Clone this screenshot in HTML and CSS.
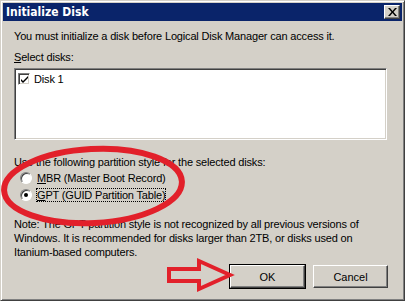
FILE: index.html
```html
<!DOCTYPE html>
<html>
<head>
<meta charset="utf-8">
<link rel="stylesheet" href="styles.css">
</head>
<body>
<div class="window">
  <div class="titlebar">
    <span class="title">Initialize Disk</span>
    <span class="close"><svg width="9" height="8" viewBox="0 0 9 8"><path d="M0 0h2l2.5 3 2.5-3h2l-3.5 4 3.5 4h-2l-2.5-3-2.5 3h-2l3.5-4z" fill="#000"/></svg></span>
  </div>
  <div class="content">
    <p class="intro">You must initialize a disk before Logical Disk Manager can access it.</p>
    <p class="label"><u>S</u>elect disks:</p>
    <div class="listbox">
      <div class="item"><span class="check"><svg width="9" height="9" viewBox="0 0 9 9"><path d="M1 4l2 2 5-5v2l-5 5-2-2z" fill="#000"/></svg></span>Disk 1</div>
    </div>
    <p class="label2">Use the following partition style for the selected disks:</p>
    <div class="radios">
      <div class="radio"><span class="rb"></span><span><u>M</u>BR (Master Boot Record)</span></div>
      <div class="radio"><span class="rb on"></span><span class="focus"><u>G</u>PT (GUID Partition Table)</span></div>
    </div>
    <p class="note">Note: The GPT partition style is not recognized by all previous versions of Windows. It is recommended for disks larger than 2TB, or disks used on Itanium-based computers.</p>
    <div class="buttons">
      <button class="btn default">OK</button>
      <button class="btn">Cancel</button>
    </div>
  </div>
  <svg class="annot" width="405" height="301" viewBox="0 0 405 301">
    <ellipse cx="92" cy="185" rx="89" ry="37" fill="none" stroke="#e2202a" stroke-width="6" transform="rotate(-3 92 185)"/>
    <path d="M168 268 H198 V260 L229 274 L198 288 V280 H168 Z" fill="none" stroke="#e2202a" stroke-width="4" stroke-linejoin="miter"/>
  </svg>
</div>
</body>
</html>
```
FILE: styles.css
```css
html, body {
  margin: 0;
  padding: 0;
}
body {
  width: 405px;
  height: 301px;
  overflow: hidden;
  font-family: "Liberation Sans", Arial, sans-serif;
  font-size: 11px;
  letter-spacing: -0.17px;
  color: #000;
}
.window {
  position: relative;
  box-sizing: border-box;
  width: 405px;
  height: 301px;
  background: #d4d0c8;
  border-top: 1px solid #d4d0c8;
  border-left: 1px solid #d4d0c8;
  border-right: 1px solid #404040;
  border-bottom: 1px solid #404040;
  box-shadow: inset 1px 1px 0 #fff, inset -1px -1px 0 #808080;
  padding: 2px;
}
.titlebar {
  height: 18px;
  background: #0a246a;
  display: flex;
  align-items: center;
  justify-content: space-between;
  padding: 0 2px 0 3px;
}
.title {
  color: #fff;
  font-weight: bold;
  font-size: 12px;
  letter-spacing: 0;
  font-family: "DejaVu Sans Condensed", "Liberation Sans", sans-serif;
}
.close {
  width: 16px;
  height: 14px;
  box-sizing: border-box;
  background: #d4d0c8;
  border-top: 1px solid #fff;
  border-left: 1px solid #fff;
  border-right: 1px solid #404040;
  border-bottom: 1px solid #404040;
  box-shadow: inset -1px -1px 0 #808080;
  display: flex;
  align-items: center;
  justify-content: center;
}
.content {
  padding: 0 11px;
}
p { margin: 0; }
.intro {
  margin-top: 9px;
  line-height: 13px;
}
.label {
  margin-top: 8px;
  line-height: 13px;
}
.listbox {
  margin-top: 4px;
  height: 72px;
  box-sizing: border-box;
  background: #fff;
  border-top: 1px solid #808080;
  border-left: 1px solid #808080;
  border-right: 1px solid #fff;
  border-bottom: 1px solid #fff;
  box-shadow: inset 1px 1px 0 #404040, inset -1px -1px 0 #d4d0c8;
  padding: 3px 3px;
  width: 373px;
}
.item {
  display: flex;
  align-items: center;
  gap: 4px;
  height: 14px;
}
.check {
  width: 12px;
  height: 12px;
  box-sizing: border-box;
  border: 1px solid;
  border-color: #808080 #fff #fff #808080;
  box-shadow: inset 1px 1px 0 #404040, inset -1px -1px 0 #d4d0c8;
  display: flex;
  align-items: center;
  justify-content: center;
  background: #fff;
}
.label2 {
  margin-top: 16px;
  line-height: 13px;
}
.radios {
  margin-top: 2px;
  padding-left: 6px;
  display: flex;
  flex-direction: column;
  gap: 4px;
}
.radio {
  display: flex;
  align-items: center;
  gap: 5px;
  height: 13px;
}
.rb {
  width: 12px;
  height: 12px;
  box-sizing: border-box;
  border-radius: 50%;
  background: #fff;
  border: 1px solid;
  border-color: #808080 #fff #fff #808080;
  box-shadow: inset 1px 1px 0 #404040;
  position: relative;
}
.rb.on::after {
  content: "";
  position: absolute;
  left: 3px;
  top: 3px;
  width: 4px;
  height: 4px;
  border-radius: 50%;
  background: #000;
}
.focus {
  outline: 1px dotted #000;
  outline-offset: 0;
}
.note {
  margin-top: 16px;
  line-height: 14px;
  padding-right: 10px;
}
.buttons {
  margin-top: 6px;
  display: flex;
  justify-content: flex-end;
  gap: 8px;
  padding-right: 3px;
}
.btn {
  width: 75px;
  height: 23px;
  box-sizing: border-box;
  font-family: "Liberation Sans", Arial, sans-serif;
  font-size: 11px;
  letter-spacing: 0;
  background: #d4d0c8;
  border-top: 1px solid #fff;
  border-left: 1px solid #fff;
  border-right: 1px solid #404040;
  border-bottom: 1px solid #404040;
  box-shadow: inset -1px -1px 0 #808080;
  padding: 0;
  color: #000;
}
.btn.default {
  outline: 1px solid #000;
}
.annot {
  position: absolute;
  left: 0;
  top: 0;
  pointer-events: none;
}
```
